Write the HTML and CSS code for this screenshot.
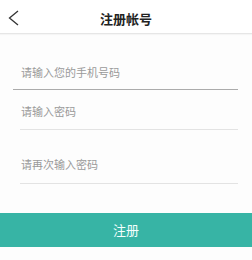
FILE: index.html
```html
<!DOCTYPE html>
<html lang="zh-CN">
<head>
<meta charset="utf-8">
<title>注册帐号</title>
<link rel="stylesheet" href="styles.css">
</head>
<body>
<div class="header">
  <svg class="back" width="12" height="16" viewBox="0 0 12 16"><polyline points="10,1 1.5,8 10,15" fill="none" stroke="#333" stroke-width="1.3"/></svg>
  <div class="title">注册帐号</div>
</div>
<div class="form">
  <div class="field field-first">请输入您的手机号码</div>
  <div class="field field-second">请输入密码</div>
  <div class="field field-third">请再次输入密码</div>
</div>
<div class="btn">注册</div>
</body>
</html>
```
FILE: styles.css
```css
html, body {
  margin: 0;
  padding: 0;
  background: #fdfdfd;
  font-family: "Noto Sans CJK SC", "Noto Sans", sans-serif;
}
.header {
  position: relative;
  height: 32px;
  border-bottom: 1px solid #e6e6e6;
  box-shadow: 0 1px 1px rgba(0,0,0,0.03);
  display: flex;
  align-items: center;
  justify-content: center;
  padding-top: 1px;
  background: #fff;
}
.back {
  position: absolute;
  left: 8px;
  top: 10px;
}
.title {
  font-size: 13px;
  font-weight: bold;
  color: #222;
  line-height: 14px;
  padding-top: 4px;
}
.form {
  padding: 0 14px 0 20px;
}
.field {
  font-size: 11px;
  line-height: 12px;
  color: #9a9a9a;
  padding-left: 1px;
  border-bottom: 1px solid #e3e3e3;
}
.field-first {
  margin-top: 32px;
  margin-left: -7px;
  padding-left: 8px;
  padding-bottom: 11px;
  border-bottom-color: #ababab;
}
.field-second {
  margin-top: 15px;
  padding-bottom: 12px;
}
.field-third {
  margin-top: 28px;
  padding-bottom: 13px;
}
.btn {
  margin-top: 29px;
  height: 34px;
  line-height: 34px;
  background: #37b4a5;
  color: #f4fffd;
  text-align: center;
  font-size: 13px;
}
```
